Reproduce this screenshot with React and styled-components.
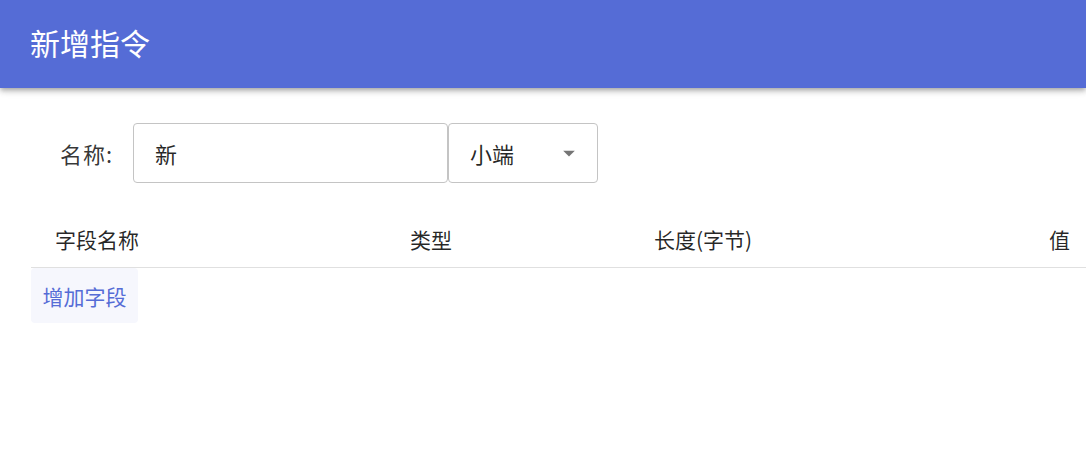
import React, { useState } from "react";
import styled, { createGlobalStyle } from "styled-components";

const GlobalStyle = createGlobalStyle`
  html, body {
    margin: 0;
    padding: 0;
    background: #fff;
    font-family: "Noto Sans CJK SC", "Noto Sans", sans-serif;
  }
`;

const Page = styled.div`
  width: 1086px;
  min-height: 465px;
  overflow: hidden;
`;

const AppBar = styled.header`
  height: 88px;
  background: #556cd6;
  display: flex;
  align-items: center;
  padding: 0 30px;
  box-shadow: 0 2px 4px -1px rgba(0, 0, 0, 0.2), 0 4px 5px 0 rgba(0, 0, 0, 0.14),
    0 1px 10px 0 rgba(0, 0, 0, 0.12);
  position: relative;
  z-index: 1;

  h1 {
    margin: 0 0 4px;
    color: #fff;
    font-size: 30px;
    font-weight: 400;
  }
`;

const Content = styled.main`
  padding: 35px 0 0 31px;
`;

const FormRow = styled.div`
  display: flex;
  align-items: center;
  padding-left: 29px;
  height: 60px;
`;

const Label = styled.label`
  width: 73px;
  font-size: 22px;
  letter-spacing: 1px;
  color: rgba(0, 0, 0, 0.8);
`;

const TextInput = styled.input`
  box-sizing: border-box;
  width: 315px;
  height: 60px;
  border: 1px solid #c4c4c4;
  border-radius: 4px;
  padding: 0 21px;
  font-family: inherit;
  font-size: 22px;
  color: rgba(0, 0, 0, 0.85);
  outline: none;
`;

const Select = styled.div`
  box-sizing: border-box;
  width: 150px;
  height: 60px;
  border: 1px solid #c4c4c4;
  border-radius: 4px;
  display: flex;
  align-items: center;
  justify-content: space-between;
  padding: 0 14px 0 21px;
  font-size: 22px;
  color: rgba(0, 0, 0, 0.85);
  cursor: pointer;
`;

const Table = styled.div`
  margin-top: 27px;
  display: grid;
  grid-template-columns: 355px 244px 1fr auto;
`;

const HeadCell = styled.div`
  height: 58px;
  box-sizing: border-box;
  border-bottom: 1px solid #e0e0e0;
  display: flex;
  align-items: center;
  padding: 0 ${(p) => (p.$right ? "16px" : "0")} 0 24px;
  justify-content: ${(p) => (p.$right ? "flex-end" : "flex-start")};
  font-size: 21px;
  color: rgba(0, 0, 0, 0.85);
`;

const AddButton = styled.button`
  width: 107px;
  height: 55px;
  border: none;
  border-radius: 4px;
  background: #f6f7fd;
  color: #556cd6;
  font-family: inherit;
  font-size: 21px;
  padding: 0;
  cursor: pointer;
`;

const DropArrow = () => (
  <svg width="28" height="28" viewBox="0 0 24 24" fill="#757575">
    <path d="M7 10l5 5 5-5z" />
  </svg>
);

export default function App() {
  const [name, setName] = useState("新");
  return (
    <Page>
      <GlobalStyle />
      <AppBar>
        <h1>新增指令</h1>
      </AppBar>
      <Content>
        <FormRow>
          <Label>名称:</Label>
          <TextInput value={name} onChange={(e) => setName(e.target.value)} />
          <Select>
            <span>小端</span>
            <DropArrow />
          </Select>
        </FormRow>
        <Table>
          <HeadCell>字段名称</HeadCell>
          <HeadCell>类型</HeadCell>
          <HeadCell>长度(字节)</HeadCell>
          <HeadCell $right>值</HeadCell>
        </Table>
        <AddButton>增加字段</AddButton>
      </Content>
    </Page>
  );
}
